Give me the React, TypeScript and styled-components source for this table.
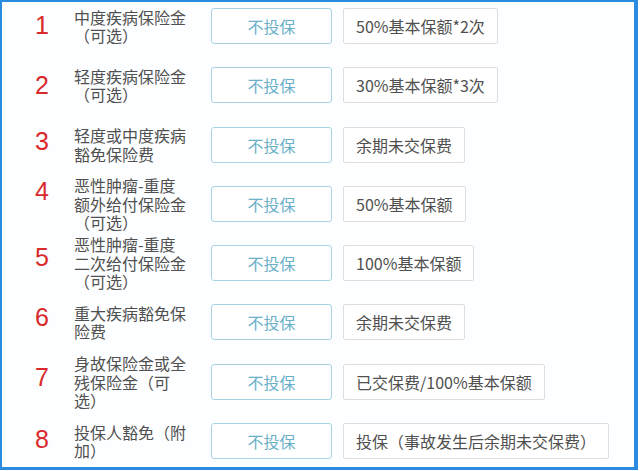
import React from "react";
import styled, { createGlobalStyle } from "styled-components";

const Global = createGlobalStyle`
  html, body { margin: 0; padding: 0; background: #ffffff; }
  body { width: 640px; height: 471px; overflow: hidden; font-family: "Noto Sans CJK SC", "Noto Sans", sans-serif; }
`;

const Frame = styled.div`
  box-sizing: border-box;
  width: 638px;
  height: 470px;
  border-style: solid;
  border-color: #2b8be0;
  border-width: 2px 4px 3px 2px;
  background: #fdfeff;
  padding-top: 6px;
  display: flex;
  flex-direction: column;
  gap: 23.3px;
`;

const Row = styled.div`
  display: grid;
  grid-template-columns: 72px 137px 121px auto;
  grid-template-rows: 36px;
  align-items: center;
  height: 36px;
  flex: none;
`;

const Num = styled.div<{ $lift: number }>`
  align-self: unsafe center;
  padding-left: 26px;
  width: 28px;
  text-align: center;
  font-family: "Liberation Sans", Arial, sans-serif;
  font-size: 25px;
  line-height: 1;
  color: #d82a2b;
  margin-bottom: ${(p) => p.$lift * 2}px;
`;

const Label = styled.div`
  align-self: unsafe center;
  width: 116px;
  font-size: 16px;
  line-height: 18.5px;
  color: #505050;
`;

const Choice = styled.div`
  box-sizing: border-box;
  height: 36px;
  border: 1px solid #a8d3e2;
  border-radius: 3px;
  background: #ffffff;
  display: flex;
  align-items: center;
  justify-content: center;
  font-size: 16px;
  color: #6ab0c9;
`;

const Value = styled.div`
  justify-self: start;
  box-sizing: border-box;
  height: 36px;
  margin-left: 11px;
  padding: 0 12px;
  border: 1px solid #dedede;
  border-radius: 2px;
  background: #ffffff;
  display: flex;
  align-items: center;
  font-size: 16px;
  color: #505050;
  white-space: nowrap;
`;

const rows = [
  { n: 1, lift: 1, label: "中度疾病保险金（可选）", value: "50%基本保额*2次" },
  { n: 2, lift: 0, label: "轻度疾病保险金（可选）", value: "30%基本保额*3次" },
  { n: 3, lift: 3, label: "轻度或中度疾病豁免保险费", value: "余期未交保费" },
  { n: 4, lift: 12, label: "恶性肿瘤-重度额外给付保险金（可选）", value: "50%基本保额" },
  { n: 5, lift: 6, label: "恶性肿瘤-重度二次给付保险金（可选）", value: "100%基本保额" },
  { n: 6, lift: 5, label: "重大疾病豁免保险费", value: "余期未交保费" },
  { n: 7, lift: 4, label: "身故保险金或全残保险金（可选）", value: "已交保费/100%基本保额" },
  { n: 8, lift: 2, label: "投保人豁免（附加）", value: "投保（事故发生后余期未交保费）" },
];

export default function App() {
  return (
    <>
      <Global />
      <Frame>
        {rows.map((r) => (
          <Row key={r.n}>
            <Num $lift={r.lift}>{r.n}</Num>
            <Label>{r.label}</Label>
            <Choice>不投保</Choice>
            <Value>{r.value}</Value>
          </Row>
        ))}
      </Frame>
    </>
  );
}
